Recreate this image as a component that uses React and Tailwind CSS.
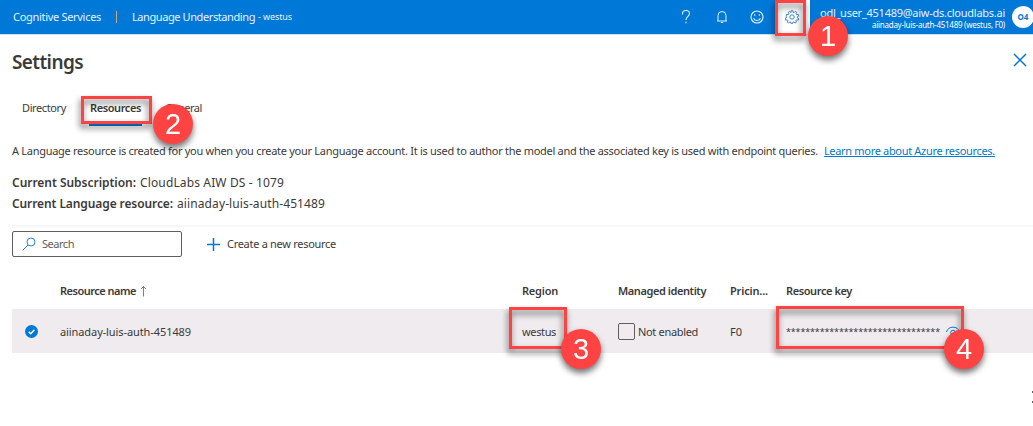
function Callout({ n, pos }) {
  return (
    <div className={`absolute flex h-10 w-10 items-center justify-center rounded-full bg-[#ff4343] font-['Liberation_Sans',sans-serif] text-[29px] leading-none text-white drop-shadow-[0_4px_3px_rgba(0,0,0,0.55)] ${pos}`}>
      {n}
    </div>
  );
}

function Frame({ pos }) {
  return <div className={`absolute border-[3px] border-[#ff4343] drop-shadow-[-1px_4px_3px_rgba(0,0,0,0.6)] ${pos}`} />;
}

function Gear() {
  return (
    <svg className="h-[14px] w-[14px]" viewBox="0 0 24 24" fill="none" stroke="#2b7cc4" strokeWidth="1.6">
      <circle cx="12" cy="12" r="3.8" />
      <path d="M10.600 1.200h2.800l.5 2.800 1.700.5 2-2.100 2.300 1.600-1.100 2.600 1.200 1.400 2.800-.4.900 2.700-2.500 1.300v1.700l2.400 1.400-1 2.700-2.800-.5-1.200 1.400 1 2.600-2.400 1.500-1.900-2.100-1.700.5-.6 2.700h-2.400l-.6-2.700-1.700-.5-1.900 2.100-2.400-1.500 1-2.600-1.200-1.400-2.800.5-1-2.700 2.400-1.400v-1.700L1.900 10.300l.9-2.700 2.800.4 1.200-1.400L5.700 4 8 2.400l2 2.100z" />
    </svg>
  );
}

export default function App() {
  return (
    <div className="relative h-[426px] w-[1033px] overflow-hidden bg-white font-['Noto_Sans',sans-serif] text-[11px] text-[#3b3a39]">
      <header className="flex h-[35px] items-center border-b border-[#c7e0f4] bg-[#0078d7] text-[#e6f2fc]">
        <div className="flex w-[680px] items-center pl-[13px]">
          <span className="whitespace-nowrap tracking-[-0.302px]">Cognitive Services</span>
          <span className="mx-[15px] h-3 w-px bg-[#c7a98a]" />
          <span className="whitespace-nowrap tracking-[-0.411px]">Language Understanding</span>
          <span className="ml-[3px] whitespace-nowrap text-[9px] tracking-[-0.104px]">- westus</span>
        </div>
        <div className="flex h-full flex-1 items-center">
          <svg className="h-4 w-3" viewBox="0 0 12 16" fill="none" stroke="#e6f2fc" strokeWidth="1.1"><path d="M2.500 5.500V4.500c0-4 7-4 7 0 0 3-3.500 3-3.500 6.500M6 12.800v1.400" /></svg>
          <svg className="ml-[23px] h-[14px] w-[14px]" viewBox="0 0 14 14" fill="none" stroke="#e6f2fc" strokeWidth="1"><path d="M2 11h10M3 11V5.500a4 4 0 0 1 8 0V11M5.800 12.500h2.400" /></svg>
          <svg className="ml-[21px] h-[14px] w-[14px]" viewBox="0 0 14 14" fill="none" stroke="#e6f2fc" strokeWidth="1.1"><circle cx="7" cy="7" r="6" /><path d="M3.600 8.200c1 3 5.800 3 6.800 0M4.700 4.200v1.600M9.300 4.200v1.600" /></svg>
          <div className="ml-[11px] flex h-full w-[35px] items-center bg-white pl-[10px]"><Gear /></div>
          <div className="flex flex-1 flex-col items-end pr-[7px] pt-px">
            <span className="whitespace-nowrap leading-[13px] tracking-[-0.257px]">odl_user_451489@aiw-ds.cloudlabs.ai</span>
            <span className="whitespace-nowrap text-[8px] leading-[11px] tracking-[-0.264px] text-white">aiinaday-luis-auth-451489 (westus, F0)</span>
          </div>
          <div className="mr-[-1px] flex h-[22px] w-[22px] shrink-0 items-center justify-center rounded-full bg-white text-[8px] font-bold text-[#0078d7]">O4</div>
        </div>
      </header>

      <main className="pl-3">
        <div className="flex h-[54px] items-center justify-between pr-[6px]">
          <h1 className="whitespace-nowrap text-[19px] font-semibold tracking-[-0.596px]">Settings</h1>
          <svg className="mb-1 h-[14px] w-[14px]" viewBox="0 0 14 14" stroke="#0078d4" strokeWidth="1.5"><path d="M1 1l12 12M13 1L1 13" /></svg>
        </div>
        <nav className="flex h-[37px] pl-[10px]">
          <span className="whitespace-nowrap leading-[38px] tracking-[-0.385px]">Directory</span>
          <span className="ml-[23px] flex h-full border-b-2 border-[#0078d4] px-px"><b className="whitespace-nowrap font-semibold leading-[38px] tracking-[-0.408px]">Resources</b></span>
          <span className="ml-[23px] whitespace-nowrap leading-[38px] tracking-[-0.55px]">General</span>
        </nav>
        <p className="mt-4 flex h-[18px] items-center gap-[6px] whitespace-nowrap">
          <span className="tracking-[-0.284px]">A Language resource is created for you when you create your Language account. It is used to author the model and the associated key is used with endpoint queries.</span>
          <a className="text-[#0078d4] underline tracking-[-0.32px]">Learn more about Azure resources.</a>
        </p>
        <div className="mt-[13px] text-[12px] leading-[20.5px]">
          <div className="flex gap-1"><b className="font-semibold tracking-[-0.03px]">Current Subscription:</b><span className="tracking-[0.133px]">CloudLabs AIW DS - 1079</span></div>
          <div className="flex gap-1"><b className="font-semibold tracking-[-0.097px]">Current Language resource:</b><span className="tracking-[0.106px]">aiinaday-luis-auth-451489</span></div>
        </div>
        <div className="mt-[11px] h-[2px] bg-[#f7f7f7]" />
        <div className="mt-1 flex h-[26px] items-center">
          <div className="flex h-[26px] w-[170px] items-center rounded-[2px] border border-[#605e5c] pl-[9px]">
            <svg className="h-[14px] w-[14px]" viewBox="0 0 14 14" fill="none" stroke="#2b88d8" strokeWidth="1"><circle cx="9" cy="5" r="4" /><path d="M6 8L.7 13.3" /></svg>
            <span className="ml-[6px] tracking-[-0.471px] text-[#605e5c]">Search</span>
          </div>
          <svg className="ml-[25px] h-[13px] w-[13px]" viewBox="0 0 13 13" stroke="#0078d4" strokeWidth="1.5"><path d="M6.500 0v13M0 6.500h13" /></svg>
          <span className="ml-[7px] whitespace-nowrap tracking-[-0.289px]">Create a new resource</span>
        </div>
        <div className="mt-[17px] grid h-[35px] grid-cols-[48px_462px_96px_112px_56px_1fr] items-center whitespace-nowrap pb-px font-semibold">
          <span />
          <div className="flex items-center">
            <span className="tracking-[-0.505px]">Resource name</span>
            <svg className="ml-1 h-3 w-[7px]" viewBox="0 0 7 12" fill="none" stroke="#605e5c" strokeWidth="0.8"><path d="M3.500 11.500V1.500M1 4l2.500-2.500L6 4" /></svg>
          </div>
          <span className="tracking-[-0.219px]">Region</span>
          <span className="tracking-[-0.419px]">Managed identity</span>
          <span className="tracking-[-0.158px]">Pricin...</span>
          <span className="tracking-[-0.402px]">Resource key</span>
        </div>
        <div className="grid h-[44px] grid-cols-[48px_462px_96px_112px_56px_1fr] items-center whitespace-nowrap bg-[#efebef] pt-px">
          <svg className="ml-[13px] h-[13px] w-[13px]" viewBox="0 0 13 13"><circle cx="6.500" cy="6.500" r="6.500" fill="#0078d4" /><path d="M3.700 6.700l2 2 3.700-3.900" fill="none" stroke="white" strokeWidth="1.500" /></svg>
          <span className="pt-px tracking-[-0.089px]">aiinaday-luis-auth-451489</span>
          <span className="pt-px tracking-[-0.362px]">westus</span>
          <div className="flex items-center">
            <span className="mr-[3px] h-[17px] w-[17px] rounded-[2px] border border-[#605e5c]" />
            <span className="pt-px tracking-[-0.327px]">Not enabled</span>
          </div>
          <span className="pt-px">F0</span>
          <div className="flex items-center">
            <span className="pt-px text-[9px] tracking-[-0.148px]">********************************</span>
            <svg className="ml-[6px] h-3 w-[14px]" viewBox="0 0 14 12" fill="none" stroke="#0078d4" strokeWidth="1"><path d="M.5 6C2-.5 12-.5 13.500 6" /><circle cx="7" cy="6.500" r="2.300" /></svg>
          </div>
        </div>
        <div className="mt-[38px] flex h-3 flex-col items-end justify-between">
          <span className="h-[2px] w-px bg-[#605e5c]" />
          <span className="h-[2px] w-px bg-[#605e5c]" />
        </div>
      </main>

      <Frame pos="left-[775px] top-0 h-9 w-[31px]" />
      <Frame pos="left-[81px] top-[96px] h-[28px] w-[71px]" />
      <Frame pos="left-[509px] top-[307px] h-[42px] w-[58px]" />
      <Frame pos="left-[776px] top-[306px] h-[43px] w-[188px]" />
      <Callout n="1" pos="left-[808px] top-[16px]" />
      <Callout n="2" pos="left-[153px] top-[104px]" />
      <Callout n="3" pos="left-[561px] top-[329px]" />
      <Callout n="4" pos="left-[944px] top-[329px]" />
    </div>
  );
}
